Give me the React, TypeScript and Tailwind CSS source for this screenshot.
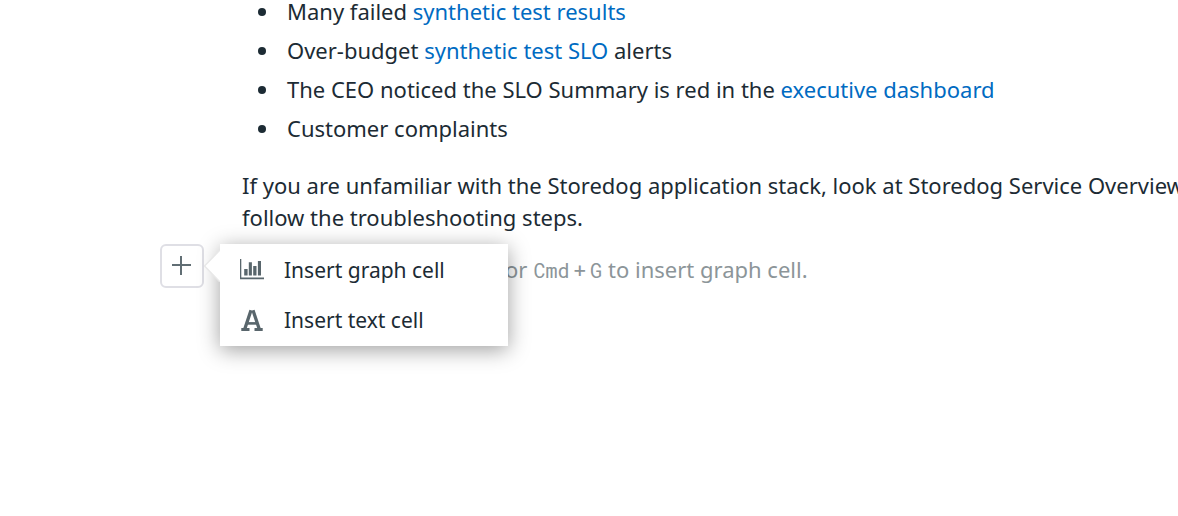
import type { ReactNode } from "react";

const link = "text-[#006bc2]";

function Item({ children }: { children: ReactNode }) {
  return (
    <li className="flex items-center gap-[21px] pl-4">
      <span className="mt-0.5 size-2 shrink-0 rounded-full bg-[#1c2b34]" />
      <span>{children}</span>
    </li>
  );
}

function ChartIcon() {
  return (
    <svg viewBox="0 0 24 22" className="h-[22px] w-6" fill="#59666c" aria-hidden="true">
      <path d="M0 0h1.3v18.5H24v1.7H0zM4.2 10H7.6v6.6H4.2zM8.8 3.3h3.1v13.3H8.8zM13.2 7h3.3v9.6h-3.3zM17.9 2H21v14.6h-3.1z" />
    </svg>
  );
}

function TextIcon() {
  return (
    <svg viewBox="0 0 24 24" className="size-6" fill="none" stroke="#59666c" aria-hidden="true">
      <path d="M4.6 21.5 11 2.2M19.4 21.5 13 2.2" strokeWidth="3.3" />
      <path d="M7 15.4h10" strokeWidth="2.6" />
      <path d="M1.3 21.5h8.2M14.5 21.5h8.2" strokeWidth="2.8" />
    </svg>
  );
}

export default function App() {
  return (
    <main className="min-h-screen overflow-hidden bg-white font-['Noto_Sans',sans-serif] text-[22px] leading-8 text-[#1c2b34]">
      <div className="pl-[242px]">
        <ul className="-mt-[5px] flex list-none flex-col gap-[7px]">
          <Item>Many failed <a href="#results" className={link}>synthetic test results</a></Item>
          <Item>Over-budget <a href="#slo" className={link}>synthetic test SLO</a> alerts</Item>
          <Item>The CEO noticed the SLO Summary is red in the <a href="#dashboard" className={link}>executive dashboard</a></Item>
          <Item>Customer complaints</Item>
        </ul>
        <p className="mt-[25px] whitespace-nowrap">
          If you are unfamiliar with the Storedog application stack, look at Storedog Service Overview
          <br />
          follow the troubleshooting steps.
        </p>
      </div>
      <div className="relative mt-[11px] flex h-11 items-center pl-40">
        <button type="button" aria-label="Insert cell" className="flex size-11 shrink-0 items-center justify-center rounded-md border-2 border-[#dfdfe5] text-[#616e74]">
          <svg viewBox="0 0 20 20" className="size-5" stroke="currentColor" strokeWidth="2"><path d="M9 0v19M0 9h19" /></svg>
        </button>
        <p className="ml-[301px] mt-1.5 flex items-baseline text-[#8c9599]">
          <span className="mr-1.5">or</span>
          <span className="mr-1.5 flex items-baseline gap-1">
            <kbd className="font-['Roboto_Mono','Liberation_Mono',monospace] text-[20px]">Cmd</kbd>
            <span className="font-medium">+</span>
            <kbd className="font-['Roboto_Mono','Liberation_Mono',monospace] text-[20px]">G</kbd>
          </span>
          <span>to insert graph cell.</span>
        </p>
        <div className="absolute left-[220px] top-0 w-72 bg-white py-px text-[21px] shadow-[0_4px_20px_rgba(0,0,0,0.38)]">
          <svg viewBox="0 0 16 32" className="absolute -left-4 top-1.5 h-8 w-4" aria-hidden="true">
            <path d="M16 0 .5 16 16 32z" fill="#fff" />
            <path d="M16 0 .5 16 16 32" fill="none" stroke="#e8e8e8" strokeWidth="1.5" />
          </svg>
          <button type="button" className="flex h-[50px] w-full items-center gap-5 px-5"><ChartIcon />Insert graph cell</button>
          <button type="button" className="flex h-[50px] w-full items-center gap-5 px-5"><TextIcon />Insert text cell</button>
        </div>
      </div>
    </main>
  );
}
